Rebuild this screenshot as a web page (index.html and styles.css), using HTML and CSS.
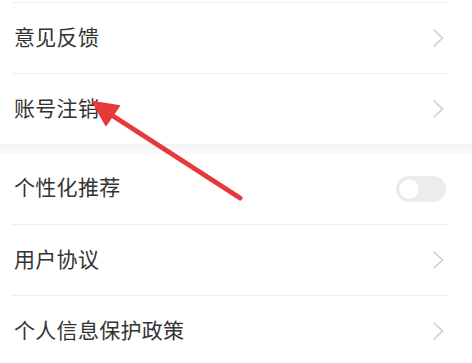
FILE: index.html
```html
<!DOCTYPE html>
<html lang="zh">
<head>
<meta charset="utf-8">
<link rel="stylesheet" href="styles.css">
</head>
<body>
<div class="page">
  <div class="group">
    <div class="row"><span class="label">意见反馈</span><svg class="chev" viewBox="0 0 12 20"><path d="M1.5 1.5 L10.5 10 L1.5 18.5" /></svg></div>
    <div class="row"><span class="label">账号注销</span><svg class="chev" viewBox="0 0 12 20"><path d="M1.5 1.5 L10.5 10 L1.5 18.5" /></svg></div>
  </div>
  <div class="band"></div>
  <div class="group">
    <div class="row"><span class="label">个性化推荐</span><span class="toggle"><span class="knob"></span></span></div>
    <div class="row"><span class="label">用户协议</span><svg class="chev" viewBox="0 0 12 20"><path d="M1.5 1.5 L10.5 10 L1.5 18.5" /></svg></div>
    <div class="row"><span class="label">个人信息保护政策</span><svg class="chev" viewBox="0 0 12 20"><path d="M1.5 1.5 L10.5 10 L1.5 18.5" /></svg></div>
  </div>
  <svg class="arrow" width="472" height="363" viewBox="0 0 472 363">
    <line x1="240" y1="198" x2="110" y2="114" stroke="#e8393a" stroke-width="5" stroke-linecap="round"/>
    <polygon points="93,102 119,106 106,125" fill="#e8393a" stroke="#e8393a" stroke-width="2" stroke-linejoin="round"/>
  </svg>
</div>
</body>
</html>
```

FILE: styles.css
```css
html, body {
  margin: 0;
  padding: 0;
  background: #ffffff;
}
.page {
  position: relative;
  width: 472px;
  height: 363px;
  overflow: hidden;
  padding-top: 2px;
  box-sizing: border-box;
  font-family: "Noto Sans CJK SC", "Noto Sans", sans-serif;
}
.group {
  padding-left: 12px;
  padding-right: 24px;
}
.row {
  height: 70px;
  border-top: 1px solid #ededed;
  display: flex;
  align-items: center;
  justify-content: space-between;
  padding-left: 2px;
  padding-right: 4px;
}
.label {
  font-size: 21px;
  color: #333333;
  letter-spacing: 0.3px;
  line-height: 1;
  margin-bottom: 4px;
}
.chev {
  width: 12px;
  height: 20px;
  fill: none;
  stroke: #cfcfcf;
  stroke-width: 1.6;
}
.band {
  height: 9px;
  background: linear-gradient(#f4f4f4, #f9f9f9);
}
.group:last-of-type .row:first-child {
  border-top: none;
  height: 71px;
}
.toggle {
  width: 50px;
  height: 26px;
  border-radius: 13px;
  background: #ececec;
  display: flex;
  align-items: center;
  padding-left: 3px;
  box-sizing: border-box;
  margin-right: -2px;
}
.knob {
  width: 20px;
  height: 20px;
  border-radius: 50%;
  background: #ffffff;
  box-shadow: 0 0 2px rgba(0,0,0,0.08);
}
.arrow {
  position: absolute;
  left: 0;
  top: 0;
}
```
